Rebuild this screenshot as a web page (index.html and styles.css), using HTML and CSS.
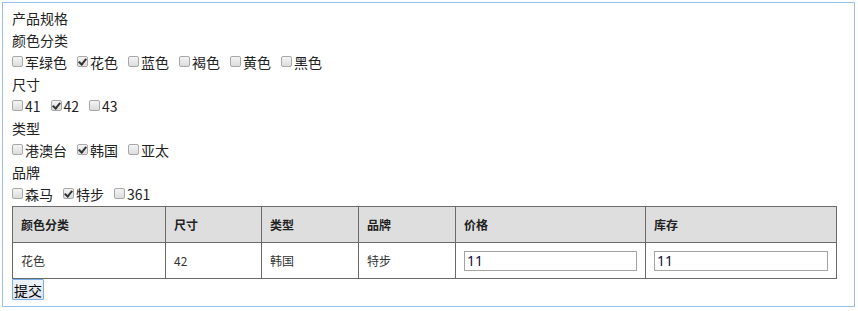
FILE: index.html
```html
<!DOCTYPE html>
<html lang="zh">
<head>
<meta charset="utf-8">
<title>产品规格</title>
<link rel="stylesheet" href="styles.css">
</head>
<body>
<div class="panel">
  <div class="line">产品规格</div>
  <div class="line">颜色分类</div>
  <div class="line opts">
    <label class="opt"><input type="checkbox" class="cb">军绿色</label>
    <label class="opt"><input type="checkbox" class="cb" checked>花色</label>
    <label class="opt"><input type="checkbox" class="cb">蓝色</label>
    <label class="opt"><input type="checkbox" class="cb">褐色</label>
    <label class="opt"><input type="checkbox" class="cb">黄色</label>
    <label class="opt"><input type="checkbox" class="cb">黑色</label>
  </div>
  <div class="line">尺寸</div>
  <div class="line opts">
    <label class="opt"><input type="checkbox" class="cb">41</label>
    <label class="opt"><input type="checkbox" class="cb" checked>42</label>
    <label class="opt"><input type="checkbox" class="cb">43</label>
  </div>
  <div class="line">类型</div>
  <div class="line opts">
    <label class="opt"><input type="checkbox" class="cb">港澳台</label>
    <label class="opt"><input type="checkbox" class="cb" checked>韩国</label>
    <label class="opt"><input type="checkbox" class="cb">亚太</label>
  </div>
  <div class="line">品牌</div>
  <div class="line opts">
    <label class="opt"><input type="checkbox" class="cb">森马</label>
    <label class="opt"><input type="checkbox" class="cb" checked>特步</label>
    <label class="opt"><input type="checkbox" class="cb">361</label>
  </div>
  <table class="sku">
    <colgroup>
      <col class="c1"><col class="c2"><col class="c3"><col class="c4"><col class="c5"><col class="c6">
    </colgroup>
    <thead>
      <tr><th>颜色分类</th><th>尺寸</th><th>类型</th><th>品牌</th><th>价格</th><th>库存</th></tr>
    </thead>
    <tbody>
      <tr>
        <td>花色</td><td>42</td><td>韩国</td><td>特步</td>
        <td><input class="field" type="text" value="11"></td>
        <td><input class="field" type="text" value="11"></td>
      </tr>
    </tbody>
  </table>
  <button class="submit" type="button">提交</button>
</div>
</body>
</html>
```

FILE: styles.css
```css
html, body {
  margin: 0;
  padding: 0;
  background: #ffffff;
}

body {
  padding: 2px 0 0 2px;
  font-family: "Noto Sans CJK SC", "Noto Sans", "Liberation Sans", sans-serif;
  font-size: 14px;
  color: #222;
}

.panel {
  box-sizing: border-box;
  width: 853px;
  height: 305px;
  border: 1px solid #9cbfe9;
  padding: 4px 9px 0 9px;
}

.line {
  height: 22px;
  line-height: 22px;
  white-space: nowrap;
}

.opts {
  display: flex;
  align-items: center;
  gap: 10px;
}

.opt {
  display: flex;
  align-items: center;
}

.cb {
  -webkit-appearance: none;
  appearance: none;
  box-sizing: border-box;
  position: relative;
  width: 11px;
  height: 11px;
  margin: 0 2px 1px 0;
  border: 1px solid #a8a8a8;
  border-radius: 2px;
  background: linear-gradient(#f4f4f4, #dcdcdc);
}

.cb:checked::after {
  content: "";
  position: absolute;
  left: 2px;
  top: 0px;
  width: 3px;
  height: 6px;
  border-right: 2px solid #333;
  border-bottom: 2px solid #333;
  transform: rotate(40deg);
}

.sku {
  margin-top: 1px;
  border-collapse: collapse;
  table-layout: fixed;
  width: 824px;
  font-size: 12px;
  color: #333;
}

.c1 { width: 153px; }
.c2 { width: 96px; }
.c3 { width: 97px; }
.c4 { width: 97px; }
.c5 { width: 190px; }
.c6 { width: 191px; }

.sku th,
.sku td {
  border: 1px solid #6a6a6a;
  height: 36px;
  padding: 0 8px;
  text-align: left;
  box-sizing: border-box;
}

.sku th {
  background: #dedede;
  font-weight: bold;
  color: #222;
}

.field {
  box-sizing: border-box;
  display: block;
  width: 100%;
  height: 20px;
  margin: 0;
  padding: 0 2px;
  border: 1px solid #a5a5a5;
  font-family: "Noto Sans", "Liberation Sans", sans-serif;
  font-size: 14px;
  color: #101040;
  background: #fff;
}

.submit {
  display: block;
  box-sizing: border-box;
  width: 32px;
  height: 21px;
  margin: 0;
  padding: 0;
  border: 1px solid #7aaee6;
  border-radius: 1px;
  background: linear-gradient(#eef3f8, #dfe5ec);
  font-family: "Noto Sans CJK SC", sans-serif;
  font-size: 14px;
  line-height: 18px;
  color: #000;
}
```
